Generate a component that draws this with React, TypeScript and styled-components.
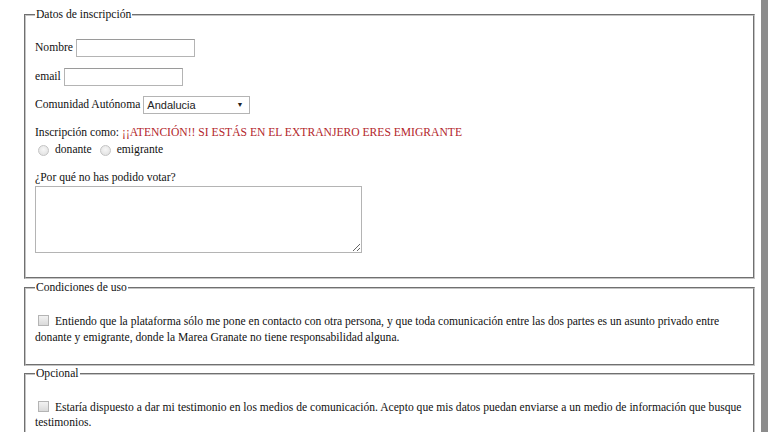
import * as React from 'react';
import styled, { createGlobalStyle } from 'styled-components';

const GlobalStyle = createGlobalStyle`
	html, body {
		margin: 0;
		padding: 0;
		background: #fff;
	}
	body {
		font-family: 'Liberation Serif', 'Times New Roman', serif;
		font-size: 11.6px;
		color: #111;
	}
`;

const Page = styled.div`
	display: flex;
	width: 768px;
	height: 432px;
	overflow: hidden;
`;

const Main = styled.div`
	flex: 1;
	display: flex;
	flex-direction: column;
	padding: 8px 6px 0 24px;
`;

// gray strip at the right edge
const SideBar = styled.div`
	width: 7px;
	background: #8c8c8c;
`;

const Fieldset = styled.fieldset<{ $gap?: number; $pb?: number }>`
	margin: ${p => p.$gap ?? 0}px 0 0 0;
	padding: 0 9px ${p => p.$pb ?? 0}px 9px;
	border: 2px groove #c4c4c4;
	min-width: 0;
`;

const Legend = styled.legend`
	padding: 0 1px;
	line-height: 14px;
`;

const Row = styled.div<{ $mt: number }>`
	display: flex;
	align-items: center;
	margin-top: ${p => p.$mt}px;
	line-height: 16px;
	white-space: nowrap;
`;

const Label = styled.span`
	margin-right: 3px;
`;

const TextInput = styled.input`
	width: 119px;
	height: 18px;
	box-sizing: border-box;
	border: 1px solid #b4b4b4;
	border-top-color: #9a9a9a;
	padding: 0 2px;
	margin: 0;
	font-size: 11px;
`;

const SelectBox = styled.div`
	display: flex;
	align-items: center;
	justify-content: space-between;
	width: 107px;
	height: 18px;
	box-sizing: border-box;
	border: 1px solid #b4b4b4;
	padding: 0 6px 0 3px;
	font-family: 'Liberation Sans', Arial, sans-serif;
	font-size: 11px;
	color: #222;
`;

const Arrow = styled.span`
	font-size: 7px;
	color: #222;
`;

const Warning = styled.span`
	color: #b3262b;
	margin-left: 3px;
`;

const Radio = styled.span`
	display: inline-block;
	width: 9px;
	height: 9px;
	border-radius: 50%;
	border: 1px solid #c4c4c4;
	background: radial-gradient(circle at 50% 40%, #f6f6f6, #dedede);
	margin: 0 6px 0 3px;
`;

const Checkbox = styled.span`
	display: inline-block;
	width: 9px;
	height: 9px;
	border: 1px solid #b4b4b4;
	background: linear-gradient(#f2f2f2, #dadada);
	margin: 0 6px 0 3px;
	vertical-align: -1px;
`;

const OptionText = styled.span`
	margin-right: 5px;
`;

const QuestionLabel = styled.div`
	margin-top: 12px;
	line-height: 16px;
`;

const TextArea = styled.textarea`
	display: block;
	width: 327px;
	height: 67px;
	box-sizing: border-box;
	border: 1px solid #b4b4b4;
	margin: 0;
	resize: both;
`;

const Paragraph = styled.p<{ $mt: number; $lh: number }>`
	margin: ${p => p.$mt}px 0 0 0;
	line-height: ${p => p.$lh}px;
`;

export default function App() {
	return (
		<Page>
			<GlobalStyle />
			<Main>
				<Fieldset $pb={24}>
					<Legend>Datos de inscripción</Legend>
					<Row $mt={17}>
						<Label>Nombre</Label>
						<TextInput type="text" />
					</Row>
					<Row $mt={11}>
						<Label>email</Label>
						<TextInput type="text" />
					</Row>
					<Row $mt={10}>
						<Label>Comunidad Autónoma</Label>
						<SelectBox>
							Andalucia
							<Arrow>▼</Arrow>
						</SelectBox>
					</Row>
					<Row $mt={11}>
						Inscripción como:
						<Warning>¡¡ATENCIÓN!! SI ESTÁS EN EL EXTRANJERO ERES EMIGRANTE</Warning>
					</Row>
					<Row $mt={1}>
						<Radio />
						<OptionText>donante</OptionText>
						<Radio />
						<OptionText>emigrante</OptionText>
					</Row>
					<QuestionLabel>¿Por qué no has podido votar?</QuestionLabel>
					<TextArea />
				</Fieldset>
				<Fieldset $gap={2} $pb={18}>
					<Legend>Condiciones de uso</Legend>
					<Paragraph $mt={19} $lh={16}>
						<Checkbox />
						Entiendo que la plataforma sólo me pone en contacto con otra persona, y que toda comunicación entre las dos partes es un asunto privado entre donante y emigrante, donde la Marea Granate no tiene responsabilidad alguna.
					</Paragraph>
				</Fieldset>
				<Fieldset $gap={1} $pb={18}>
					<Legend>Opcional</Legend>
					<Paragraph $mt={19} $lh={15}>
						<Checkbox />
						Estaría dispuesto a dar mi testimonio en los medios de comunicación. Acepto que mis datos puedan enviarse a un medio de información que busque testimonios.
					</Paragraph>
				</Fieldset>
			</Main>
			<SideBar />
		</Page>
	);
}
